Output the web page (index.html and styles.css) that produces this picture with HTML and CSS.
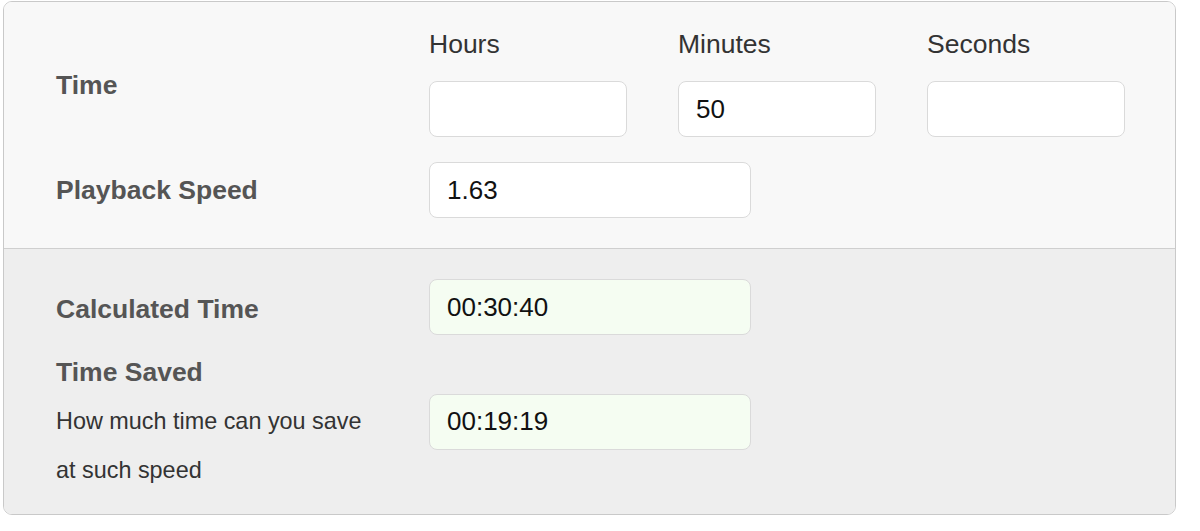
FILE: index.html
```html
<!DOCTYPE html>
<html lang="en">
<head>
    <meta charset="UTF-8">
    <meta name="viewport" content="width=device-width, initial-scale=1.0">
    <title>Playback Speed Calculator</title>
    <link rel="stylesheet" href="styles.css">
</head>
<body>

    <div class="calc-card">
        <div class="calc-inputs">
            <div class="calc-row">
                <label class="row-label">Time</label>
                <div class="field">
                    <span class="field-title">Hours</span>
                    <input type="text" id="hours" value="">
                </div>
                <div class="field">
                    <span class="field-title">Minutes</span>
                    <input type="text" id="minutes" value="50">
                </div>
                <div class="field">
                    <span class="field-title">Seconds</span>
                    <input type="text" id="seconds" value="">
                </div>
            </div>
            <div class="calc-row">
                <label class="row-label" for="speed">Playback Speed</label>
                <input type="text" id="speed" class="wide" value="1.63">
            </div>
        </div>

        <div class="calc-results">
            <div class="calc-row">
                <label class="row-label" for="calculated">Calculated Time</label>
                <input type="text" id="calculated" class="wide result" value="00:30:40" readonly>
            </div>
            <div class="calc-row">
                <div class="row-label">
                    Time Saved
                    <p class="help">How much time can you save at such speed</p>
                </div>
                <input type="text" id="saved" class="wide result" value="00:19:19" readonly>
            </div>
        </div>
    </div>

</body>
</html>
```

FILE: styles.css
```css
* {
    margin: 0;
    padding: 0;
    box-sizing: border-box;
}

body {
    font-family: 'Liberation Sans', Arial, sans-serif;
    background-color: #fff;
    padding: 1px 24px 0 3px;
}

.calc-card {
    width: 1173px;
    border: 1px solid #c9c9c9;
    border-radius: 9px;
    overflow: hidden;
}

.calc-inputs {
    background-color: #f8f8f8;
    padding: 27px 50px 30px 52px;
    display: flex;
    flex-direction: column;
    gap: 25px;
}

.calc-results {
    background-color: #eee;
    border-top: 1px solid #cfcfcf;
    padding: 30px 50px 19px 52px;
    display: flex;
    flex-direction: column;
    gap: 13px;
}

.calc-row {
    display: grid;
    grid-template-columns: 322px 198px 198px 198px;
    column-gap: 51px;
    align-items: center;
}

.row-label {
    font-size: 26.5px;
    font-weight: bold;
    color: #555;
    line-height: 49px;
}

.calc-row:first-child > .row-label {
    padding-top: 4px;
}

.help {
    font-size: 23.4px;
    font-weight: normal;
    color: #333;
    line-height: 49px;
}

.field {
    display: flex;
    flex-direction: column;
}

.field-title {
    font-size: 26.5px;
    line-height: 30px;
    color: #333;
    margin-bottom: 22px;
}

input {
    width: 198px;
    height: 56px;
    padding: 0 17px;
    font-family: 'Liberation Sans', Arial, sans-serif;
    font-size: 26px;
    color: #111;
    background-color: #fff;
    border: 1px solid #dadada;
    border-radius: 8px;
    outline: none;
}

input.wide {
    width: 322px;
    grid-column: 2 / 5;
}

input.result {
    background-color: #f5fdf2;
}
```
